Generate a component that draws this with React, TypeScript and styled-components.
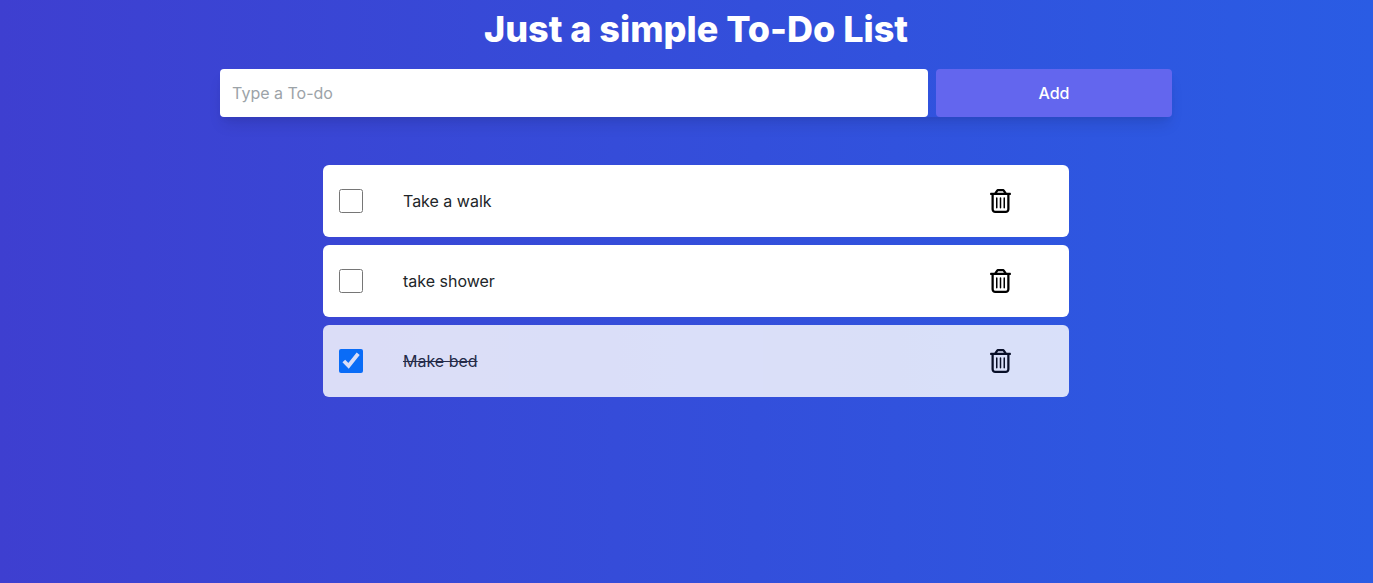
import React, { useState } from "react";
import styled, { createGlobalStyle } from "styled-components";

const GlobalStyle = createGlobalStyle`
  *, *::before, *::after { box-sizing: border-box; }
  body { margin: 0; font-family: Inter, "Liberation Sans", sans-serif; font-size: 16px; line-height: 24px; }
`;

const Page = styled.main`
  display: flex;
  flex-direction: column;
  align-items: center;
  min-height: 100vh;
  padding: 9px 0 24px 19px;
  background: linear-gradient(to right, #3e3fd0, #2a5ce4);
`;

const Title = styled.h1`
  margin: 0 0 20px;
  font-size: 36px;
  font-weight: 800;
  line-height: 40px;
  color: #fff;
`;

const Form = styled.form`
  display: grid;
  grid-template-columns: 3fr 1fr;
  gap: 8px;
  width: 70.3%;
  margin-bottom: 48px;
  border-radius: 4px;
  box-shadow: 0 10px 15px -3px rgba(0, 0, 0, 0.1), 0 4px 6px -2px rgba(0, 0, 0, 0.05);
`;

const TextField = styled.input`
  min-width: 0;
  height: 48px;
  padding: 0 12px;
  border: 0;
  border-radius: 4px;
  background: #fff;
  color: #1f2937;
  font: inherit;
  outline: none;
  &::placeholder { color: #9ca3a8; opacity: 1; }
`;

const AddButton = styled.button`
  height: 48px;
  padding: 0;
  border: 0;
  border-radius: 4px;
  background: #6366ee;
  color: #fff;
  font: inherit;
  font-weight: 500;
  cursor: pointer;
`;

const List = styled.ul`
  display: flex;
  flex-direction: column;
  gap: 8px;
  width: 55.1%;
  margin: 0;
  padding: 0;
  list-style: none;
`;

const Item = styled.li<{ $done: boolean }>`
  display: flex;
  align-items: center;
  height: 72px;
  padding: 0 58px 0 16px;
  border-radius: 6px;
  background: #fff;
  color: #212529;
  opacity: ${(p) => (p.$done ? 0.82 : 1)};
`;

const Label = styled.label<{ $done: boolean }>`
  display: flex;
  flex: 1;
  align-items: center;
  gap: 40px;
  text-decoration: ${(p) => (p.$done ? "line-through" : "none")};
`;

const Checkbox = styled.input`
  flex: none;
  width: 24px;
  height: 24px;
  margin: 0;
`;

const DeleteButton = styled.button`
  display: flex;
  padding: 0;
  border: 0;
  background: none;
  color: #000;
  cursor: pointer;
`;

const TrashIcon = () => (
  <svg width="21" height="24" viewBox="0 0 448 512" fill="currentColor" aria-hidden="true">
    <path d="M160 400C160 408.8 152.8 416 144 416C135.2 416 128 408.8 128 400V192C128 183.2 135.2 176 144 176C152.8 176 160 183.2 160 192V400zM240 400C240 408.8 232.8 416 224 416C215.2 416 208 408.8 208 400V192C208 183.2 215.2 176 224 176C232.8 176 240 183.2 240 192V400zM320 400C320 408.8 312.8 416 304 416C295.2 416 288 408.8 288 400V192C288 183.2 295.2 176 304 176C312.8 176 320 183.2 320 192V400zM317.5 24.94L354.2 80H424C437.3 80 448 90.75 448 104C448 117.3 437.3 128 424 128H416V432C416 476.2 380.2 512 336 512H112C67.82 512 32 476.2 32 432V128H24C10.75 128 0 117.3 0 104C0 90.75 10.75 80 24 80H93.82L130.5 24.94C140.9 9.357 158.4 0 177.1 0H270.9C289.6 0 307.1 9.358 317.5 24.94zM151.5 80H296.5L277.5 51.56C276 49.34 273.5 48 270.9 48H177.1C174.5 48 171.1 49.34 170.5 51.56L151.5 80zM80 432C80 449.7 94.33 464 112 464H336C353.7 464 368 449.7 368 432V128H80V432z" />
  </svg>
);

type Todo = { id: number; text: string; done: boolean };

const initialTodos: Todo[] = [
  { id: 1, text: "Take a walk", done: false },
  { id: 2, text: "take shower", done: false },
  { id: 3, text: "Make bed", done: true },
];

export default function App() {
  const [todos, setTodos] = useState(initialTodos);
  const [draft, setDraft] = useState("");

  const add = (e: React.FormEvent) => {
    e.preventDefault();
    const text = draft.trim();
    if (!text) return;
    setTodos([...todos, { id: Date.now(), text, done: false }]);
    setDraft("");
  };
  const toggle = (id: number) =>
    setTodos(todos.map((t) => (t.id === id ? { ...t, done: !t.done } : t)));
  const remove = (id: number) => setTodos(todos.filter((t) => t.id !== id));

  return (
    <>
      <GlobalStyle />
      <Page>
        <Title>Just a simple To-Do List</Title>
        <Form onSubmit={add}>
          <TextField
            aria-label="Type a To-do"
            placeholder="Type a To-do"
            value={draft}
            onChange={(e) => setDraft(e.target.value)}
          />
          <AddButton type="submit">Add</AddButton>
        </Form>
        <List>
          {todos.map((t) => (
            <Item key={t.id} $done={t.done}>
              <Label $done={t.done}>
                <Checkbox type="checkbox" checked={t.done} onChange={() => toggle(t.id)} />
                {t.text}
              </Label>
              <DeleteButton type="button" aria-label={`Delete ${t.text}`} onClick={() => remove(t.id)}>
                <TrashIcon />
              </DeleteButton>
            </Item>
          ))}
        </List>
      </Page>
    </>
  );
}
